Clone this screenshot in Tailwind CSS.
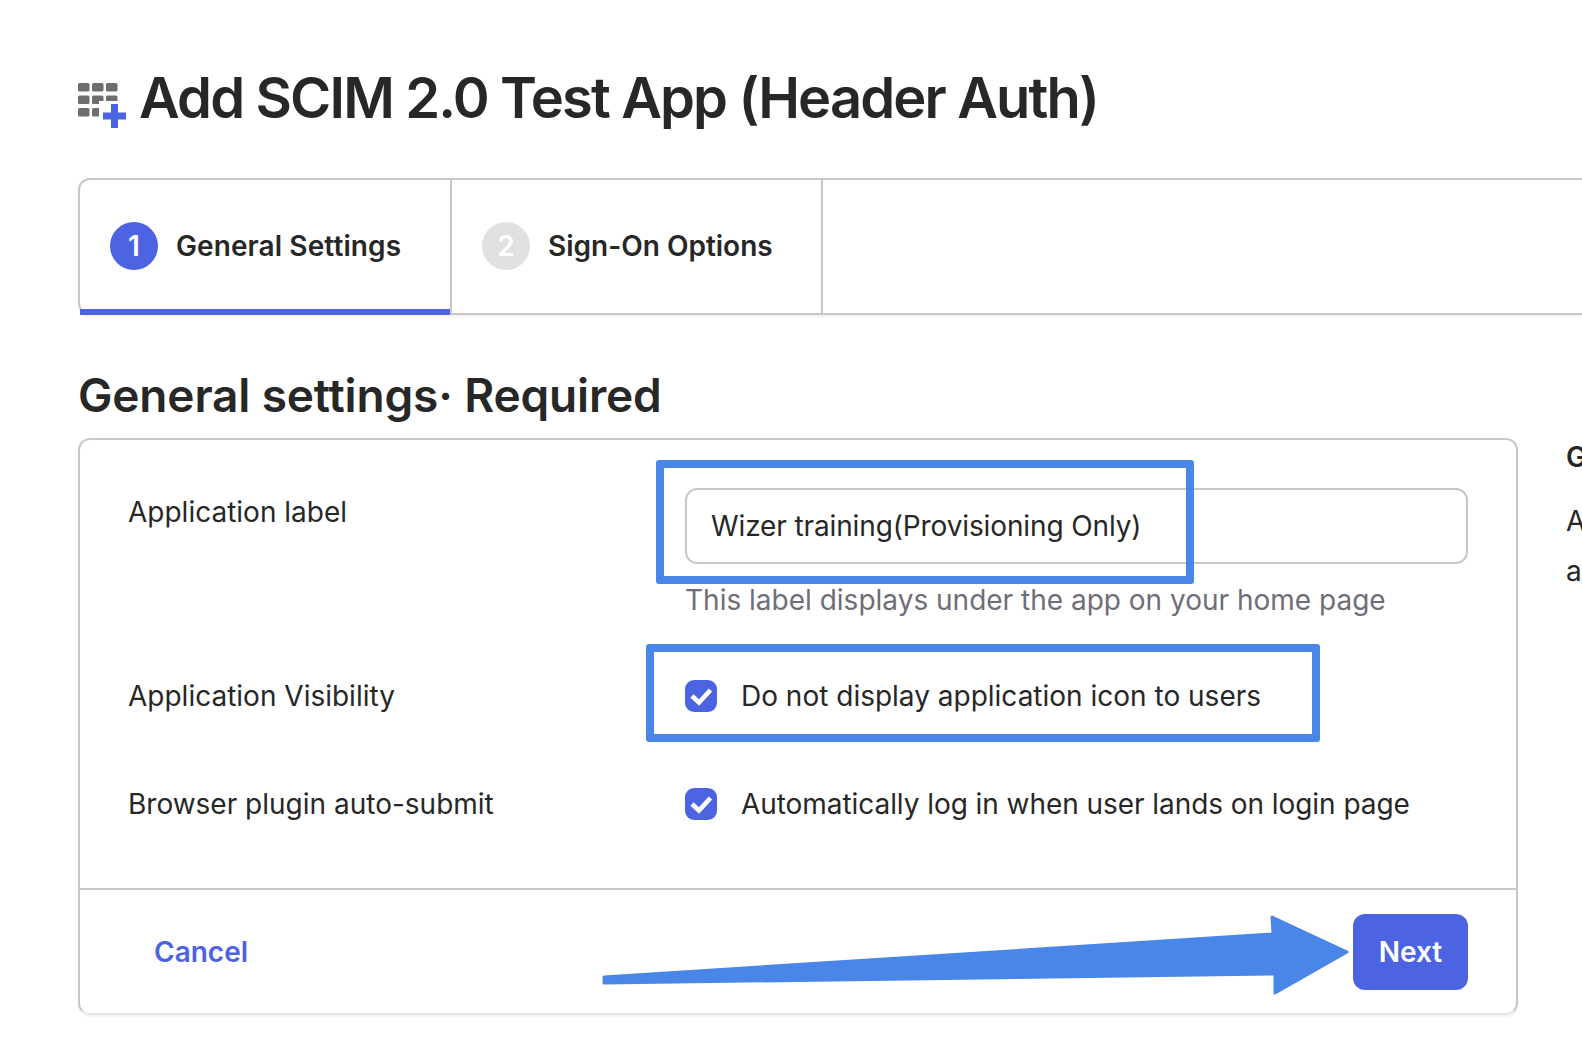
<!DOCTYPE html>
<html lang="en">
<head>
  <meta charset="UTF-8">
  <meta name="viewport" content="width=device-width, initial-scale=1.0">
  <title>Add SCIM 2.0 Test App</title>
  <script src="https://cdn.jsdelivr.net/npm/@tailwindcss/browser@4"></script>
</head>
<body class="relative w-[1582px] h-[1050px] overflow-hidden bg-white font-['Inter',sans-serif] text-[#272727]">
  <!-- Title -->
  <div class="flex pl-[78px] pt-[64px] h-[178px] items-start">
    <svg class="w-[50px] h-[50px] shrink-0 mt-[18px]" viewBox="0 0 50 50">
      <g fill="#6e6e6e">
        <rect x="0" y="1" width="11.5" height="8.5" rx="1.5"/><rect x="14" y="1" width="11.5" height="8.5" rx="1.5"/><rect x="28" y="1" width="11.5" height="8.5" rx="1.5"/>
        <rect x="0" y="13.5" width="11.5" height="8.5" rx="1.5"/><rect x="14" y="13.5" width="11.5" height="8.5" rx="1.5"/><rect x="28" y="13.5" width="11.5" height="8.5" rx="1.5"/>
        <rect x="0" y="26" width="11.5" height="8.5" rx="1.5"/><rect x="14" y="26" width="11.5" height="8.5" rx="1.5"/>
      </g>
      <path d="M21 19h19v5h10v16H21z" fill="#fff"/>
      <path d="M36.500 22v24M25 34h23" stroke="#4c64e2" stroke-width="7" fill="none"/>
    </svg>
    <h1 class="ml-[11px] text-[56px] leading-[68px] font-semibold tracking-[-1.85px] whitespace-nowrap">Add SCIM 2.0 Test App (Header Auth)</h1>
  </div>

  <!-- Steps -->
  <div class="ml-[78px] flex h-[137px] border-2 border-r-0 border-[#c8c8c8] rounded-l-[12px] shadow-[0_2px_3px_rgba(0,0,0,0.05)]">
    <div class="w-[372px] border-r-2 border-[#c8c8c8] flex flex-col -mb-[2px]">
      <div class="flex-1 flex items-center pl-[30px] pt-[3px]">
        <span class="w-[48px] h-[48px] rounded-full bg-[#4c64e2] text-white text-[28px] font-semibold flex items-center justify-center">1</span>
        <span class="ml-[18px] text-[28px] font-semibold tracking-[0.1px] whitespace-nowrap">General Settings</span>
      </div>
      <div class="h-[6px] bg-[#4c64e2]"></div>
    </div>
    <div class="w-[371px] border-r-2 border-[#c8c8c8] flex items-center pl-[30px] pb-[1px]">
      <span class="w-[48px] h-[48px] rounded-full bg-[#e1e1e1] text-white text-[28px] font-semibold flex items-center justify-center">2</span>
      <span class="ml-[18px] text-[28px] font-semibold whitespace-nowrap">Sign-On Options</span>
    </div>
  </div>

  <h2 class="ml-[78px] mt-[52px] h-[56px] text-[46px] leading-[56px] font-semibold tracking-[-0.15px] whitespace-nowrap">General settings· Required</h2>

  <div class="flex mt-[15px] ml-[78px]">
    <!-- Form card -->
    <div class="w-[1440px] h-[577px] shrink-0 border-2 border-[#c8c8c8] border-b-[#e6e6e6] rounded-[12px] shadow-[0_2px_2px_rgba(0,0,0,0.05)] flex flex-col">
      <div class="flex-1 pl-[48px] pr-[48px] pt-[48px] text-[28px]">
        <div class="flex">
          <label class="w-[557px] shrink-0 leading-[48px]">Application label</label>
          <div class="flex-1">
            <div class="h-[76px] border-2 border-[#c8c8c8] rounded-[12px] flex items-center pl-[24px] tracking-[-0.12px]">Wizer training(Provisioning Only)</div>
            <p class="h-[40px] leading-[40px] mt-[16px] text-[#6e6e78]">This label displays under the app on your home page</p>
          </div>
        </div>
        <div class="flex items-center h-[48px] mt-[52px]">
          <label class="w-[557px] shrink-0">Application Visibility</label>
          <span class="w-[32px] h-[32px] rounded-[9px] bg-[#4c64e2]">
            <svg class="w-[32px] h-[32px]" viewBox="0 0 32 32"><path d="M7 16l7 6.500L25.500 10" stroke="#fff" stroke-width="4.600" fill="none"/></svg>
          </span>
          <span class="ml-[24px] whitespace-nowrap">Do not display application icon to users</span>
        </div>
        <div class="flex items-center h-[48px] mt-[60px]">
          <label class="w-[557px] shrink-0">Browser plugin auto-submit</label>
          <span class="w-[32px] h-[32px] rounded-[9px] bg-[#4c64e2]">
            <svg class="w-[32px] h-[32px]" viewBox="0 0 32 32"><path d="M7 16l7 6.500L25.500 10" stroke="#fff" stroke-width="4.600" fill="none"/></svg>
          </span>
          <span class="ml-[24px] whitespace-nowrap tracking-[-0.06px]">Automatically log in when user lands on login page</span>
        </div>
      </div>
      <div class="h-[125px] border-t-2 border-[#c8c8c8] flex items-center justify-between pl-[74px] pr-[48px]">
        <a href="#" class="text-[28px] font-semibold text-[#4c64e2]">Cancel</a>
        <button class="w-[115px] h-[76px] rounded-[12px] bg-[#4c64e2] text-white text-[28px] font-semibold">Next</button>
      </div>
    </div>
    <!-- Side help, cut off by the window -->
    <div class="ml-[48px] pt-[1px] shrink-0 w-[600px] text-[28px] leading-[50px]">
      <p class="font-semibold leading-[36px]">General Settings</p>
      <p class="mt-[21px]">All fields are required to add this<br>application unless marked optional.</p>
    </div>
  </div>

  <!-- Annotations -->
  <div class="absolute left-[656px] top-[460px] w-[538px] h-[124px] border-[8px] border-[#4a86e8] rounded-[3px]"></div>
  <div class="absolute left-[646px] top-[644px] w-[674px] h-[98px] border-[8px] border-[#4a86e8] rounded-[3px]"></div>
  <svg class="absolute left-0 top-0 w-[1582px] h-[1050px] pointer-events-none" viewBox="0 0 1582 1050">
    <path d="M604 977L1273 934L1272 917L1347 952L1275 993L1275 974L604 983Z" fill="#4a86e8" stroke="#4a86e8" stroke-width="3" stroke-linejoin="round"/>
  </svg>
</body>
</html>
